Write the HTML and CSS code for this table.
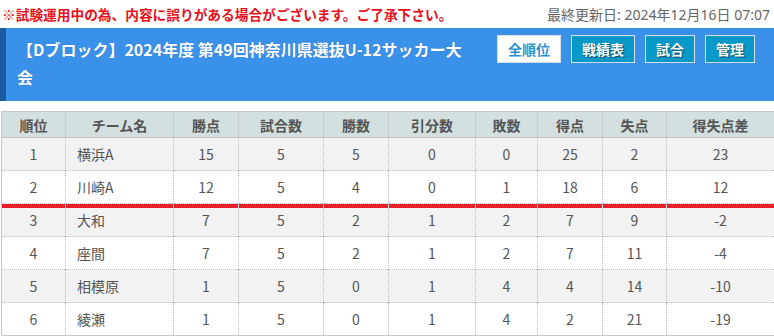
FILE: index.html
```html
<!DOCTYPE html>
<html lang="ja">
<head>
<meta charset="utf-8">
<link rel="stylesheet" href="styles.css">
</head>
<body>
<div class="notice">
  <span class="warn">※試験運用中の為、内容に誤りがある場合がございます。ご了承下さい。</span>
  <span class="updated">最終更新日: 2024年12月16日 07:07</span>
</div>
<div class="header">
  <h1 class="title">【Dブロック】2024年度 第49回神奈川県選抜U-12サッカー大会</h1>
  <div class="buttons">
    <a class="btn btn-active">全順位</a>
    <a class="btn">戦績表</a>
    <a class="btn">試合</a>
    <a class="btn">管理</a>
  </div>
</div>
<table class="standings">
  <colgroup>
    <col class="c64"><col class="c108"><col class="c65"><col class="c85"><col class="c65">
    <col class="c87"><col class="c62"><col class="c65"><col class="c64"><col class="c108">
  </colgroup>
  <thead>
    <tr><th>順位</th><th>チーム名</th><th>勝点</th><th>試合数</th><th>勝数</th><th>引分数</th><th>敗数</th><th>得点</th><th>失点</th><th>得失点差</th></tr>
  </thead>
  <tbody>
    <tr class="odd"><td>1</td><td class="team">横浜A</td><td>15</td><td>5</td><td>5</td><td>0</td><td>0</td><td>25</td><td>2</td><td>23</td></tr>
    <tr><td>2</td><td class="team">川崎A</td><td>12</td><td>5</td><td>4</td><td>0</td><td>1</td><td>18</td><td>6</td><td>12</td></tr>
    <tr class="odd cutline"><td>3</td><td class="team">大和</td><td>7</td><td>5</td><td>2</td><td>1</td><td>2</td><td>7</td><td>9</td><td>-2</td></tr>
    <tr><td>4</td><td class="team">座間</td><td>7</td><td>5</td><td>2</td><td>1</td><td>2</td><td>7</td><td>11</td><td>-4</td></tr>
    <tr class="odd"><td>5</td><td class="team">相模原</td><td>1</td><td>5</td><td>0</td><td>1</td><td>4</td><td>4</td><td>14</td><td>-10</td></tr>
    <tr><td>6</td><td class="team">綾瀬</td><td>1</td><td>5</td><td>0</td><td>1</td><td>4</td><td>2</td><td>21</td><td>-19</td></tr>
  </tbody>
</table>
</body>
</html>
```

FILE: styles.css
```css
html, body {
  margin: 0;
  padding: 0;
  background: #fff;
  overflow: hidden;
}
body {
  font-family: "Noto Sans CJK JP", "Noto Sans", sans-serif;
  color: #555;
}
.notice {
  display: flex;
  justify-content: space-between;
  align-items: center;
  height: 28px;
  padding: 0 4px 0 2px;
}
.warn {
  color: #e8101c;
  font-weight: bold;
  font-size: 13.7px;
}
.updated {
  color: #666;
  font-size: 14px;
  font-family: "Noto Sans", "Noto Sans CJK JP", sans-serif;
}
.header {
  display: flex;
  align-items: flex-start;
  background: #3a91ea;
  border-left: 6px solid #1b5a9e;
  padding: 7px 19px 10px 11px;
  height: 56px;
}
.title {
  flex: 0 0 448px;
  margin: 0;
  font-size: 16px;
  line-height: 28px;
  font-weight: bold;
  color: #fff;
  text-shadow: 0 0 1px rgba(0,0,0,0.25);
}
.buttons {
  display: flex;
  gap: 10px;
  margin-left: 32px;
}
.btn {
  display: block;
  height: 26px;
  line-height: 26px;
  padding: 0 10px;
  border: 1px solid #d8dde2;
  background: #0899c9;
  color: #fff;
  font-size: 14px;
  font-weight: bold;
  text-shadow: 1px 1px 1px rgba(0,0,0,0.55);
}
.btn-active {
  background: #fff;
  color: #2a93cf;
  text-shadow: none;
}
.standings {
  margin: 10px 0 0 1px;
  border-collapse: collapse;
  table-layout: fixed;
  width: 773px;
  font-size: 14px;
  border: 1px solid #c8c8c8;
}
.c64 { width: 64px; }
.c108 { width: 108px; }
.c65 { width: 65px; }
.c85 { width: 85px; }
.c87 { width: 87px; }
.c62 { width: 62px; }
.standings th {
  height: 25px;
  background: #d4dfdf;
  font-weight: bold;
  color: #555;
  border-left: 1px dotted #bbb;
  border-bottom: 1px solid #c4c4c4;
  padding: 0;
  text-align: center;
}
.standings td {
  height: 32px;
  padding: 0;
  text-align: center;
  color: #555;
  border-left: 1px dotted #bbb;
  border-top: 1px dotted #bbb;
}
.standings th:first-child, .standings td:first-child {
  border-left: none;
}
.standings td.team {
  text-align: left;
  padding-left: 11px;
}
.standings tr.odd td {
  background: #f2f2f2;
}
.standings tr.cutline td {
  box-shadow: inset 0 4px 0 #e8202a;
}
```
